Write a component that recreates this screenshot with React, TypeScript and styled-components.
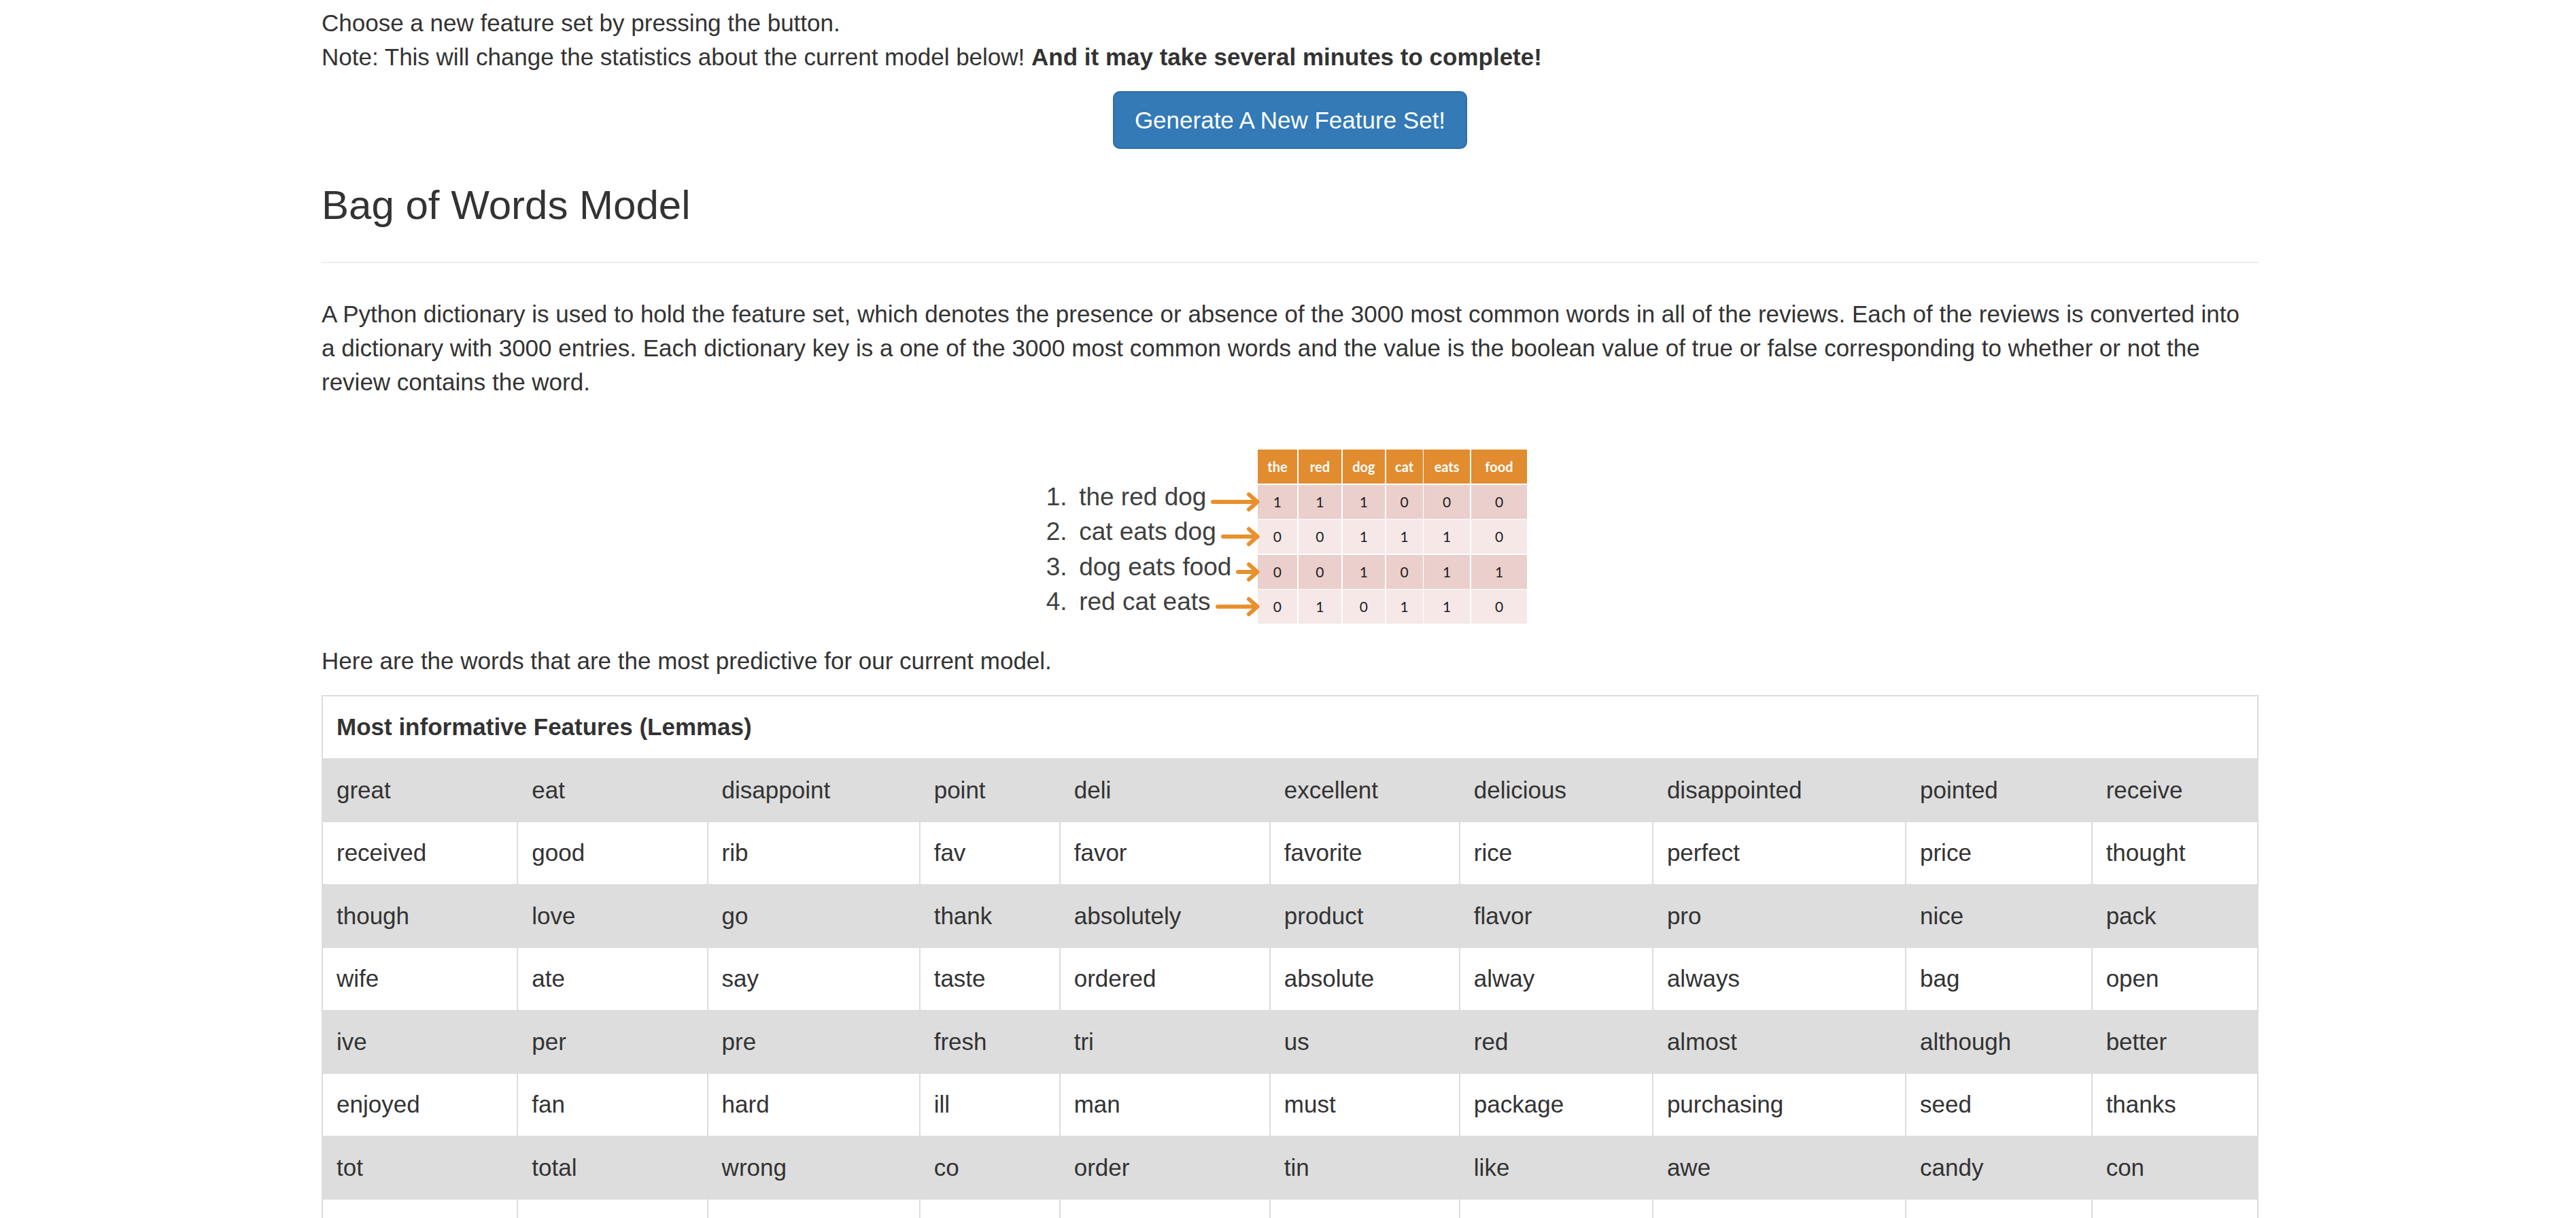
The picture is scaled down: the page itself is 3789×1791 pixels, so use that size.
import React from "react";
import styled, { createGlobalStyle } from "styled-components";

const GlobalStyle = createGlobalStyle`
  html, body {
    margin: 0;
    padding: 0;
    height: 100%;
    overflow: hidden;
    background: #ffffff;
  }
  body {
    font-family: "Liberation Sans", Arial, Helvetica, sans-serif;
    font-size: 35px;
    line-height: 50px;
    color: #333333;
  }
  * { box-sizing: border-box; }
`;

const Page = styled.div`
  padding-top: 9px;
`;

const Container = styled.div`
  width: 2849px;
  margin-left: 473px;
`;

const Paragraph = styled.p`
  margin: 0 0 25px;
`;

const ButtonRow = styled.div`
  display: flex;
  justify-content: center;
`;

const PrimaryButton = styled.button`
  font-family: inherit;
  font-size: 35px;
  line-height: 50px;
  padding: 15.5px 30px;
  color: #ffffff;
  background: #337ab7;
  border: 2px solid #2e6da4;
  border-radius: 10px;
  cursor: pointer;
`;

const SectionTitle = styled.h3`
  font-size: 60px;
  line-height: 66px;
  font-weight: 500;
  margin: 50px 0 25px;
  color: #333333;
`;

const Divider = styled.hr`
  margin: 50px 0;
  border: 0;
  border-top: 2px solid #eeeeee;
`;

const Figure = styled.div`
  display: flex;
  justify-content: center;
  padding: 49px 10px 0 0;
  margin-bottom: 30px;
`;

const FigureBox = styled.div`
  display: flex;
  align-items: flex-start;
`;

const SentenceList = styled.div`
  width: 311px;
  padding-top: 51.5px;
  display: flex;
  flex-direction: column;
  gap: 1.5px;
`;

const SentenceRow = styled.div`
  height: 50px;
  display: flex;
  align-items: center;
`;

const SentenceLabel = styled.span`
  font-family: "Liberation Sans", Arial, sans-serif;
  font-size: 37px;
  line-height: 32px;
  padding-bottom: 14px;
  color: #404040;
  white-space: nowrap;
`;

const SentenceNum = styled.span`
  display: inline-block;
  width: 48.5px;
`;

const Arrow = styled.div`
  flex: 1;
  min-width: 30px;
  height: 30px;
  margin-left: 7px;
  margin-right: -3px;
  display: flex;
  align-items: center;
`;

const ArrowShaft = styled.div`
  flex: 1;
  height: 6px;
  background: #e8902e;
  margin-right: -14px;
  border-radius: 3px;
`;

const Matrix = styled.div`
  display: grid;
  grid-template-columns: 58.5px 63.5px 62.5px 53.9px 68.1px 82.7px;
  grid-template-rows: repeat(5, 50px);
  gap: 1.5px;
  background: #ffffff;
  font-family: Lato, "Open Sans", sans-serif;
`;

const MatrixHead = styled.div`
  background: #e28c30;
  color: #ffffff;
  font-weight: 700;
  font-size: 20px;
  display: flex;
  align-items: center;
  justify-content: center;
`;

const MatrixCell = styled.div<{ $dark: boolean }>`
  background: ${(p) => (p.$dark ? "#eacfcc" : "#f5e8e7")};
  color: #1e1e1e;
  font-size: 21px;
  display: flex;
  align-items: center;
  justify-content: center;
`;

const FeatureTable = styled.table`
  width: 100%;
  table-layout: fixed;
  border-collapse: collapse;
  border: 2px solid #dddddd;
`;

const Col = styled.col<{ $w: number }>`
  width: ${(p) => p.$w}px;
`;

const HeadCell = styled.th`
  text-align: left;
  font-weight: 700;
  padding: 20px;
  line-height: 50.5px;
  border: 2px solid #dddddd;
  background: #ffffff;
`;

const BodyRow = styled.tr<{ $striped: boolean }>`
  background: ${(p) => (p.$striped ? "#dddddd" : "#ffffff")};
`;

const BodyCell = styled.td`
  padding: 20px;
  height: 92.5px;
  line-height: 50.5px;
  border: 2px solid #dddddd;
  vertical-align: top;
  white-space: nowrap;
  overflow: hidden;
`;

const ArrowHead = () => (
  <svg width="20" height="30" viewBox="0 0 20 30" style={{ flex: "none", position: "relative" }}>
    <polyline
      points="4,4 16.5,15 4,26"
      fill="none"
      stroke="#e8902e"
      strokeWidth="6"
      strokeLinecap="round"
      strokeLinejoin="round"
    />
  </svg>
);

const sentences = ["the red dog", "cat eats dog", "dog eats food", "red cat eats"];
const vocab = ["the", "red", "dog", "cat", "eats", "food"];
const matrix = [
  [1, 1, 1, 0, 0, 0],
  [0, 0, 1, 1, 1, 0],
  [0, 0, 1, 0, 1, 1],
  [0, 1, 0, 1, 1, 0],
];

const colWidths = [287.2, 279.3, 312, 206, 309, 279, 284, 372, 273.6, 244.2];

const features = [
  ["great", "eat", "disappoint", "point", "deli", "excellent", "delicious", "disappointed", "pointed", "receive"],
  ["received", "good", "rib", "fav", "favor", "favorite", "rice", "perfect", "price", "thought"],
  ["though", "love", "go", "thank", "absolutely", "product", "flavor", "pro", "nice", "pack"],
  ["wife", "ate", "say", "taste", "ordered", "absolute", "alway", "always", "bag", "open"],
  ["ive", "per", "pre", "fresh", "tri", "us", "red", "almost", "although", "better"],
  ["enjoyed", "fan", "hard", "ill", "man", "must", "package", "purchasing", "seed", "thanks"],
  ["tot", "total", "wrong", "co", "order", "tin", "like", "awe", "candy", "con"],
  ["", "", "", "", "", "", "", "", "", ""],
];

export default function App() {
  return (
    <>
      <GlobalStyle />
      <Page>
        <Container>
          <Paragraph>
            Choose a new feature set by pressing the button.
            <br />
            Note: This will change the statistics about the current model below!{" "}
            <strong>And it may take several minutes to complete!</strong>
          </Paragraph>
          <ButtonRow>
            <PrimaryButton type="button">Generate A New Feature Set!</PrimaryButton>
          </ButtonRow>

          <SectionTitle>Bag of Words Model</SectionTitle>
          <Divider />

          <Paragraph>
            A Python dictionary is used to hold the feature set, which denotes the presence or absence of the
            3000 most common words in all of the reviews. Each of the reviews is converted into a dictionary with
            3000 entries. Each dictionary key is a one of the 3000 most common words and the value is the boolean
            value of true or false corresponding to whether or not the review contains the word.
          </Paragraph>

          <Figure>
            <FigureBox>
              <SentenceList>
                {sentences.map((s, i) => (
                  <SentenceRow key={s}>
                    <SentenceLabel>
                      <SentenceNum>{i + 1}.</SentenceNum>
                      {s}
                    </SentenceLabel>
                    <Arrow>
                      <ArrowShaft />
                      <ArrowHead />
                    </Arrow>
                  </SentenceRow>
                ))}
              </SentenceList>
              <Matrix>
                {vocab.map((w) => (
                  <MatrixHead key={w}>{w}</MatrixHead>
                ))}
                {matrix.map((row, r) =>
                  row.map((v, c) => (
                    <MatrixCell key={`${r}-${c}`} $dark={r % 2 === 0}>
                      {v}
                    </MatrixCell>
                  ))
                )}
              </Matrix>
            </FigureBox>
          </Figure>

          <Paragraph>Here are the words that are the most predictive for our current model.</Paragraph>

          <FeatureTable>
            <colgroup>
              {colWidths.map((w, i) => (
                <Col key={i} $w={w} />
              ))}
            </colgroup>
            <thead>
              <tr>
                <HeadCell colSpan={10}>Most informative Features (Lemmas)</HeadCell>
              </tr>
            </thead>
            <tbody>
              {features.map((row, r) => (
                <BodyRow key={r} $striped={r % 2 === 0}>
                  {row.map((w, c) => (
                    <BodyCell key={c}>{w}</BodyCell>
                  ))}
                </BodyRow>
              ))}
            </tbody>
          </FeatureTable>
        </Container>
      </Page>
    </>
  );
}
